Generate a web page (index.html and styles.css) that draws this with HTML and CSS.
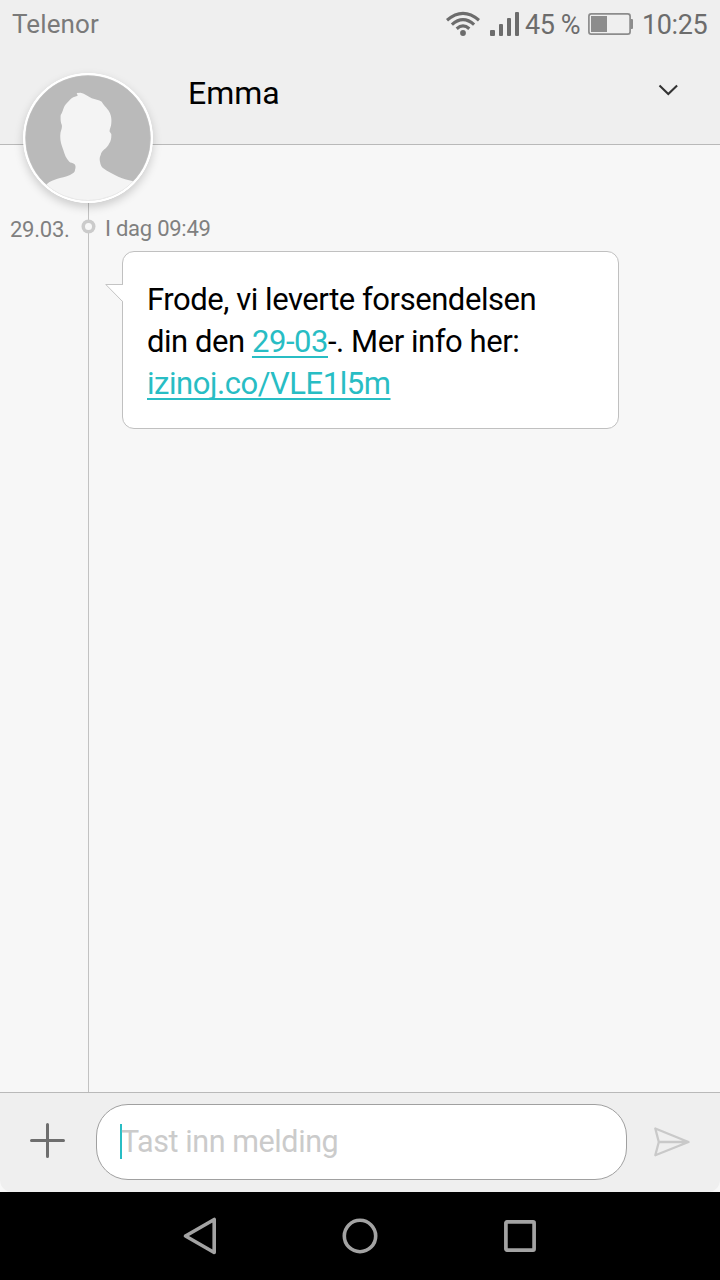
FILE: index.html
```html
<!DOCTYPE html>
<html lang="no">
<head>
    <meta charset="UTF-8">
    <meta name="viewport" content="width=device-width, initial-scale=1.0">
    <title>Emma</title>
    <link rel="stylesheet" href="styles.css">
</head>
<body>
    <div class="phone">
        <!-- Status bar -->
        <div class="status-bar">
            <span class="carrier">Telenor</span>
            <svg class="wifi" width="34" height="26" viewBox="0 0 34 26">
                <g fill="none" stroke="#6c6c6c" stroke-width="3.2" stroke-linecap="butt">
                    <path d="M1 9.2 Q17 -4.6 33 9.2"/>
                    <path d="M5.9 13.6 Q17 3.6 28.1 13.6"/>
                    <path d="M10.7 17.7 Q17 12.2 23.3 17.7"/>
                </g>
                <circle cx="17" cy="22" r="2.9" fill="#6c6c6c"/>
            </svg>
            <svg class="signal" width="30" height="24" viewBox="0 0 30 24" fill="#6c6c6c">
                <rect x="0" y="18" width="5" height="6" rx="1"/>
                <rect x="9" y="12" width="4" height="12" rx="1"/>
                <rect x="17" y="6" width="4" height="18" rx="1"/>
                <rect x="25" y="0" width="4" height="24" rx="1"/>
            </svg>
            <span class="percent">45 %</span>
            <svg class="battery" width="45" height="22" viewBox="0 0 45 22">
                <rect x="0.9" y="0.9" width="41.2" height="20.2" rx="2.4" fill="none" stroke="#8c8c8c" stroke-width="1.7"/>
                <rect x="3" y="3" width="16" height="16" fill="#8c8c8c"/>
                <path d="M42.5 6H44q1 0 1 1v8q0 1-1 1h-1.5z" fill="#8c8c8c"/>
            </svg>
            <span class="clock">10:25</span>
        </div>

        <!-- Contact header -->
        <header class="contact">
            <svg class="avatar" width="130" height="130" viewBox="0 0 130 130">
                <clipPath id="avatar-clip">
                    <circle cx="65" cy="65" r="63"/>
                </clipPath>
                <circle cx="65" cy="65" r="65" fill="#fff"/>
                <circle cx="65" cy="65" r="62.7" fill="#bababa"/>
                <path clip-path="url(#avatar-clip)" fill="#f4f4f4" d="M53.7 20 L57.7 19.7 C62 20.5 65 23.5 68.7 25.3 C72 26.5 76 27 78.7 28.7 C81 33 85.5 36 87 40.3 C88.6 44 88.5 47 88.3 50.3 C88.3 54 86 57 86.7 58.7 L88.3 61 C88.5 65 88 68 86.3 70.3 C84 76 78.5 77 77.7 82 C76.5 84 76.5 87 77 88.7 C77.5 92 78.5 94 80.3 95.3 C85 99 90 101 95.3 103.7 C100 106 106 107 111 108.5 L112 130 H20 L23.7 111.3 C27 108 30 107.5 33.7 106 C38 104.5 43 104 47 102 C50 100.5 52 99 52 97 C53 94 52.5 92 51.3 91 C49.5 89.5 47.5 90 46.3 88.7 C43 85.5 41.5 81 40.3 77 C38 71 37 67 37.3 62 C37.3 58 39.5 56 38.8 52 C37.3 48 37.5 45 37.7 42 C40 39 40.5 33 43.7 30.3 C46 28 48 25 50.3 24.3 L54.7 22.7Z"/>
                <circle cx="65" cy="65" r="62.5" fill="none" stroke="#cfcfcf" stroke-opacity="0.5" stroke-width="0.6"/>
                <circle cx="65" cy="65" r="64" fill="none" stroke="#fff" stroke-width="2"/>
            </svg>
            <h1>Emma</h1>
            <svg class="chevron" width="20" height="12" viewBox="0 0 20 12">
                <path d="M1.5 1.5 L10.3 10 L19.1 1.5" fill="none" stroke="#333" stroke-width="2.1"/>
            </svg>
        </header>

        <!-- Conversation -->
        <main class="conversation">
            <div class="day">29.03.</div>
            <div class="thread">
                <span class="dot"></span>
                <div class="time">I dag 09:49</div>
                <div class="bubble">
                    <svg class="tail" width="19" height="20" viewBox="0 0 19 20">
                        <path d="M19 0.5 H1 L18 17.5 H19Z" fill="#fff"/>
                        <path d="M18 0.5 H0.8 L17.5 17.5" fill="none" stroke="#c4c4c4"/>
                    </svg>
                    Frode, vi leverte forsendelsen<br>
                    din den <a href="#">29-03</a>-. Mer info her:<br>
                    <a href="#">izinoj.co/VLE1l5m</a>
                </div>
            </div>
        </main>

        <!-- Message input -->
        <div class="composer-wrap">
            <div class="composer">
                <svg class="plus" width="35" height="35" viewBox="0 0 35 35">
                    <path d="M1.5 17.5H33.5M17.5 1.5V33.5" stroke="#6e6e6e" stroke-width="3" stroke-linecap="round"/>
                </svg>
                <div class="field"><span class="caret"></span><span class="placeholder">Tast inn melding</span></div>
                <svg class="send" width="36" height="30" viewBox="0 0 36 30">
                    <path d="M1.3 1.5 L34.5 15 L1.3 28.2 L4.8 15Z M4.8 15H34" fill="none" stroke="#c9c9c9" stroke-width="2.3" stroke-linejoin="round"/>
                </svg>
            </div>
        </div>

        <!-- Android navigation -->
        <nav class="nav-bar">
            <svg width="34" height="38" viewBox="0 0 34 38">
                <path d="M31.2 2.5 V35.5 L2.5 19Z" fill="none" stroke="#a3a3a3" stroke-width="3.6" stroke-linejoin="round"/>
            </svg>
            <svg class="home" width="36" height="36" viewBox="0 0 36 36">
                <circle cx="18" cy="18" r="15.7" fill="none" stroke="#a3a3a3" stroke-width="3.6"/>
            </svg>
            <svg width="32" height="32" viewBox="0 0 32 32">
                <rect x="1.9" y="1.9" width="28.2" height="28.2" rx="1" fill="none" stroke="#a3a3a3" stroke-width="3.7"/>
            </svg>
        </nav>
    </div>
</body>
</html>
```

FILE: styles.css
```css
body {
    margin: 0;
    font-family: Roboto, "Liberation Sans", sans-serif;
    background-color: #f7f7f7;
}

.phone {
    display: flex;
    flex-direction: column;
    width: 720px;
    height: 1280px;
    overflow: hidden;
}

svg {
    display: block;
    flex-shrink: 0;
}

/* Status bar */
.status-bar {
    display: flex;
    align-items: center;
    box-sizing: border-box;
    height: 48px;
    padding: 0 12px;
    background-color: #efefef;
    color: #6c6c6c;
    font-size: 27px;
    line-height: 46px;
    letter-spacing: -0.4px;
    white-space: nowrap;
}

.carrier {
    margin-right: auto;
    color: #7a7a7a;
    font-size: 26px;
    letter-spacing: 0.1px;
}

.wifi {
    margin-right: 10px;
}

.signal {
    margin-right: 5px;
}

.percent {
    width: 63px;
    padding-top: 2px;
}

.battery {
    margin-right: 9px;
}

.clock {
    width: 66px;
    padding-top: 2px;
}

/* Contact header */
.contact {
    position: relative;
    display: flex;
    justify-content: space-between;
    box-sizing: border-box;
    height: 97px;
    padding: 25px 42px 0 188px;
    background-color: #efefef;
    border-bottom: 1px solid #b9b9b9;
}

.contact h1 {
    margin: 0;
    font-size: 32px;
    font-weight: 400;
    line-height: 40px;
    color: #000;
}

.chevron {
    margin-top: 11px;
}

.avatar {
    position: absolute;
    left: 23px;
    top: 25px;
    z-index: 1;
    border-radius: 50%;
    box-shadow: 0 4px 10px rgba(0, 0, 0, 0.18);
}

/* Conversation */
.conversation {
    display: flex;
    flex: 1;
    background-color: #f7f7f7;
    color: #808080;
    font-size: 22px;
    line-height: 26px;
    letter-spacing: -0.25px;
}

.day {
    box-sizing: border-box;
    width: 88px;
    padding: 72px 0 0 10px;
}

.thread {
    position: relative;
    flex: 1;
    padding: 71px 0 0 16px;
    border-left: 1px solid #c2c2c2;
}

.dot {
    position: absolute;
    left: -7px;
    top: 75px;
    box-sizing: border-box;
    width: 13px;
    height: 13px;
    border: 3.5px solid #cbcbcb;
    border-width: 3.5px;
    border-radius: 50%;
    background-color: #f7f7f7;
    box-shadow: 0 0 0 0.5px #cbcbcb;
}

.bubble {
    position: relative;
    box-sizing: border-box;
    width: 497px;
    height: 178px;
    margin: 9px 0 0 17px;
    padding: 27px 24px 25px;
    border: 1px solid #c0c0c0;
    border-radius: 12px;
    background-color: #fff;
    color: #000;
    font-size: 31px;
    line-height: 42px;
    letter-spacing: -0.45px;
    white-space: nowrap;
}

.bubble a {
    color: #28bdc4;
    text-decoration: underline;
    text-decoration-thickness: 1.5px;
    text-decoration-skip-ink: none;
    text-underline-offset: 4px;
}

.tail {
    position: absolute;
    left: -18px;
    top: 32px;
}

/* Message input */
.composer-wrap {
    background-color: #f8f8f8;
}

.composer {
    display: flex;
    align-items: center;
    box-sizing: border-box;
    height: 100px;
    padding: 0 30px;
    border-top: 1px solid #b9b9b9;
    border-radius: 0 0 12px 12px;
    background-color: #efefef;
}

.plus {
    margin: -4px 31px 0 0;
}

.field {
    display: flex;
    align-items: center;
    box-sizing: border-box;
    width: 531px;
    height: 76px;
    margin-right: 27px;
    margin-top: -1px;
    padding: 0 0 2px 23px;
    border: 1px solid #a0a0a0;
    border-radius: 32px;
    background-color: #fff;
}

.send {
    margin-top: -2px;
}

.caret {
    width: 2px;
    height: 35px;
    background-color: #28bdc4;
}

.placeholder {
    margin-left: -1px;
    color: #cbcbcb;
    font-size: 30.5px;
    letter-spacing: -0.42px;
}

/* Android navigation */
.nav-bar {
    display: flex;
    align-items: center;
    justify-content: space-between;
    box-sizing: border-box;
    height: 88px;
    padding: 0 184px 0 183px;
    background-color: #000;
}

.home {
    margin-left: -2px;
}
```
